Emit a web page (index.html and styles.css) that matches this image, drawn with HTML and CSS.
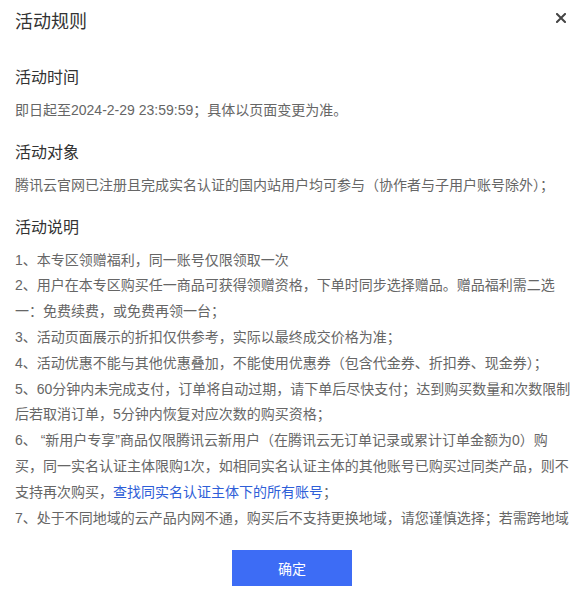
FILE: index.html
```html
<!DOCTYPE html>
<html lang="zh-CN">
<head>
<meta charset="utf-8">
<title>活动规则</title>
<link rel="stylesheet" href="styles.css">
</head>
<body>
<div class="dialog">
  <div class="header">
    <div class="title">活动规则</div>
    <button class="close" aria-label="关闭">
      <svg width="10" height="10" viewBox="0 0 10 10"><path d="M1 1L9 9M9 1L1 9" stroke="#444" stroke-width="2" stroke-linecap="square" fill="none"/></svg>
    </button>
  </div>
  <div class="content">
    <div class="section">
      <h3 class="heading">活动时间</h3>
      <p class="text">即日起至2024-2-29 23:59:59；具体以页面变更为准。</p>
    </div>
    <div class="section">
      <h3 class="heading">活动对象</h3>
      <p class="text">腾讯云官网已注册且完成实名认证的国内站用户均可参与（协作者与子用户账号除外）；</p>
    </div>
    <div class="section">
      <h3 class="heading">活动说明</h3>
      <p class="text">1、本专区领赠福利，同一账号仅限领取一次</p>
      <p class="text">2、用户在本专区购买任一商品可获得领赠资格，下单时同步选择赠品。赠品福利需二选一：免费续费，或免费再领一台；</p>
      <p class="text">3、活动页面展示的折扣仅供参考，实际以最终成交价格为准；</p>
      <p class="text">4、活动优惠不能与其他优惠叠加，不能使用优惠券（包含代金券、折扣券、现金券）；</p>
      <p class="text">5、60分钟内未完成支付，订单将自动过期，请下单后尽快支付；达到购买数量和次数限制后若取消订单，5分钟内恢复对应次数的购买资格；</p>
      <p class="text">6、 “新用户专享”商品仅限腾讯云新用户（在腾讯云无订单记录或累计订单金额为0）购买，同一实名认证主体限购1次，如相同实名认证主体的其他账号已购买过同类产品，则不支持再次购买，<a class="link" href="#">查找同实名认证主体下的所有账号</a>；</p>
      <p class="text">7、处于不同地域的云产品内网不通，购买后不支持更换地域，请您谨慎选择；若需跨地域内网互通，请使用云联网等产品实现；</p>
    </div>
  </div>
  <div class="footer">
    <button class="btn-primary">确定</button>
  </div>
</div>
</body>
</html>
```

FILE: styles.css
```css
* {
  box-sizing: border-box;
}

html, body {
  margin: 0;
  padding: 0;
  background: #fff;
}

body {
  font-family: "Liberation Sans", "Noto Sans CJK SC", sans-serif;
  color: #333;
}

.dialog {
  width: 584px;
  height: 600px;
  display: flex;
  flex-direction: column;
  background: #fff;
}

.header {
  height: 44px;
  padding: 0 15px;
  display: flex;
  align-items: center;
  justify-content: space-between;
}

.title {
  font-size: 18px;
  line-height: 44px;
  color: #333;
}

.close {
  width: 20px;
  height: 20px;
  padding: 0;
  margin-right: -2px;
  margin-top: -8px;
  border: 0;
  background: none;
  display: flex;
  align-items: center;
  justify-content: center;
  cursor: pointer;
}

.content {
  height: 486px;
  overflow: hidden;
  padding: 22px 13px 0 15px;
}

.section + .section {
  margin-top: 17px;
}

.heading {
  margin: 0 0 8px;
  font-size: 16px;
  line-height: 24px;
  font-weight: normal;
  color: #333;
}

.text {
  margin: 0;
  font-size: 14px;
  line-height: 25.8px;
  color: #666;
}

.link {
  color: #2e5ed8;
  text-decoration: none;
}

.footer {
  display: flex;
  justify-content: center;
  padding-top: 20px;
}

.btn-primary {
  width: 120px;
  height: 36px;
  border: 0;
  border-radius: 0;
  background: #3d6cf5;
  color: #fff;
  font-family: "Liberation Sans", "Noto Sans CJK SC", sans-serif;
  font-size: 14px;
  cursor: pointer;
}
```
